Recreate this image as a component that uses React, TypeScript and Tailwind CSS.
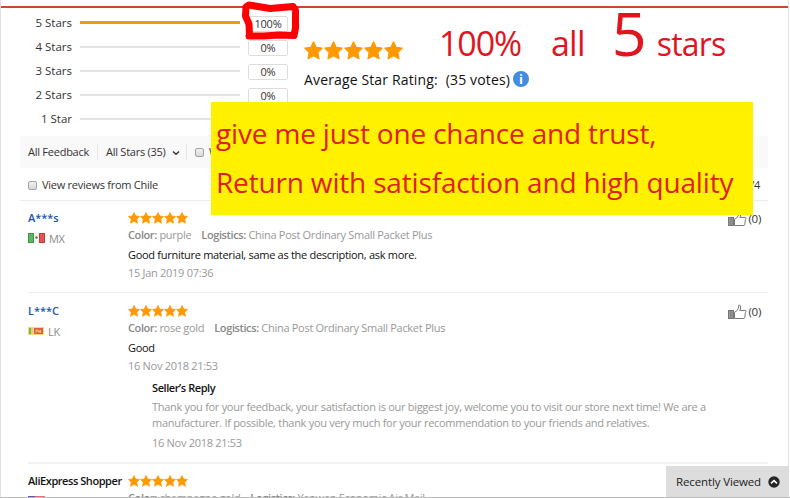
import type { ReactNode } from "react";

const ratings = [
  { label: "5 Stars", percent: 100 },
  { label: "4 Stars", percent: 0 },
  { label: "3 Stars", percent: 0 },
  { label: "2 Stars", percent: 0 },
  { label: "1 Star", percent: 0 },
];

function Stars({ size, step }: { size: number; step: number }) {
  return (
    <svg width={step * 5} height={size} className="block" fill="#ff9900">
      {[0, 1, 2, 3, 4].map((i) => (
        <path
          key={i}
          transform={`translate(${i * step} 0) scale(${size / 20})`}
          d="M10 0.8 L12.8 6.7 L19.2 7.5 L14.6 12 L15.8 18.8 L10 15.5 L4.2 18.8 L5.4 12 L0.8 7.5 L7.2 6.7 Z"
          stroke="#ff9900"
          strokeWidth="1.2"
          strokeLinejoin="round"
        />
      ))}
    </svg>
  );
}

function Checkbox() {
  return (
    <span className="h-[9px] w-[9px] shrink-0 rounded-[2px] border border-[#a3a3a3] bg-linear-to-b from-[#f2f2f2] to-[#d9d9d9]" />
  );
}

function Helpful() {
  return (
    <div className="mr-[7px] mt-px flex h-5 items-center gap-[2px] text-[11.5px] tracking-[-0.3px] text-[#333]">
      <svg width="19" height="16" viewBox="0 0 19 16" fill="none" stroke="#777" strokeWidth="1">
        <rect x="0.5" y="6.5" width="5" height="8" fill="#999" />
        <path d="M2.5 7v7M4 7v7" stroke="#777" strokeWidth="0.6" />
        <path
          fill="#fff"
          d="M6.5 8.2 L8.5 7.2 L10.4 4.4 V1.8 C10.4 .8 12.3 .8 12.5 2 V5.2 L11.7 6.4 H17 C18.4 6.4 18.2 8.2 17.4 8.5 L16.8 13.4 Q16.6 14.5 15.7 14.5 H6.5 Z"
        />
      </svg>
      <span>(0)</span>
    </div>
  );
}

function Flag({ country }: { country: string }) {
  if (country === "MX") {
    return (
      <svg width="17" height="10" className="block">
        <rect width="17" height="10" fill="#f4f6f4" />
        <rect x="0.5" y="0.5" width="5" height="9" fill="#5fb564" stroke="#39964a" />
        <rect x="11.5" y="0.5" width="5" height="9" fill="#e05555" stroke="#c73939" />
        <circle cx="8.5" cy="4.5" r="1.2" fill="#5f6f57" />
      </svg>
    );
  }
  if (country === "LK") {
    return (
      <svg width="16" height="8" className="block">
        <rect width="16" height="8" fill="#f4d67c" />
        <rect x="1" y="1" width="2" height="6" fill="#76bb4a" />
        <rect x="3" y="1" width="2" height="6" fill="#f3c97a" />
        <rect x="6" y="1" width="9" height="6" fill="#d8603c" />
        <path d="M8 6V3h2v2h2V3l1 3" fill="none" stroke="#f2c779" />
      </svg>
    );
  }
  return (
    <svg width="17" height="10" className="block">
      <rect width="17" height="10" fill="#f3dada" />
      <path d="M0 .5h17M0 3.5h17M0 6.5h17" stroke="#df7474" />
      <rect width="7" height="6" fill="#5558b0" />
    </svg>
  );
}

type ReviewProps = {
  user: ReactNode;
  country: string;
  color: string;
  logistics: string;
  children?: ReactNode;
};

function Review({ user, country, color, logistics, children }: ReviewProps) {
  return (
    <div className="flex">
      <div className="w-[100px] shrink-0 whitespace-nowrap text-[11px] leading-5">
        {user}
        <div className="flex h-5 items-center gap-1 tracking-[-0.3px] text-[#8c8c8c]">
          <Flag country={country} />
          {country !== "US" && <span className="pt-[2px]">{country}</span>}
        </div>
      </div>
      <div className="min-w-0 flex-1 text-[11px] tracking-[-0.29px]">
        <div className="pt-[4px]">
          <Stars size={12} step={12} />
        </div>
        <div className="mt-[3px] flex h-4 items-center gap-[10px] whitespace-nowrap text-[#999]">
          <span>
            <b className="font-semibold tracking-[-0.4px] text-[#888]">Color:</b> {color}
          </span>
          <span>
            <b className="font-semibold tracking-[-0.4px] text-[#888]">Logistics:</b> {logistics}
          </span>
        </div>
        {children}
      </div>
      {children && <Helpful />}
    </div>
  );
}

export default function App() {
  return (
    <div
      className="relative h-[498px] w-[790px] overflow-hidden bg-white text-[#333]"
      style={{ fontFamily: '"Open Sans", "Noto Sans", sans-serif' }}
    >
      <div className="h-full w-[789px] border-x border-[#e2e2e2] pt-[6px]">
        <div className="h-[2px] bg-[#d1432b]" />
        <section className="flex h-[128px] pt-[3px]">
          <div className="w-[303px]">
            {ratings.map(({ label, percent }) => (
              <div key={label} className="flex h-6 items-center text-[11.5px]">
                <span className="w-[71px] text-right">{label}</span>
                <div className="mx-2 h-[2px] w-40 bg-[#e3e3e3]">
                  <div className="-mt-px h-[3px] bg-[#f7941d]" style={{ width: `${percent}%` }} />
                </div>
                <span className="mt-[2px] flex h-4 w-10 items-center justify-center rounded-[2px] border border-[#ddd] text-[11px] tracking-[-0.2px]">
                  {percent}%
                </span>
              </div>
            ))}
          </div>
          <div className="pt-[30px]">
            <Stars size={19} step={20} />
            <div className="mt-[9px] flex h-5 items-center text-[14px] tracking-[0.14px] text-[#111]">
              <span>Average Star Rating:</span>
              <span className="ml-2">(35 votes)</span>
              <span className="ml-[3px] flex h-4 w-4 items-center justify-center rounded-full bg-[#438cdf] text-[13px] font-bold leading-none text-white">
                i
              </span>
            </div>
          </div>
        </section>

        <div className="ml-[19px] w-[748px]">
          <div className="flex h-8 items-center bg-[#f9f9f9] pl-2 text-[11px] tracking-[-0.25px]">
            <span className="w-[69px] whitespace-nowrap">All Feedback</span>
            <span className="flex h-4 w-[89px] items-center gap-[6px] whitespace-nowrap border-l border-[#e7e7e7] pl-2 pt-px">
              All Stars (35)
              <svg width="8" height="6" fill="none" stroke="#333" strokeWidth="1.4">
                <path d="M1 1.5 4 4.3 7 1.5" />
              </svg>
            </span>
            <span className="flex h-4 items-center gap-[5px] border-l border-[#e7e7e7] pl-2">
              <Checkbox />
              With
            </span>
          </div>
          <div className="flex h-[33px] items-center border-b border-[#ebebeb] px-2 pt-[2px] text-[11px] tracking-[-0.26px]">
            <Checkbox />
            <span className="ml-[5px]">View reviews from Chile</span>
            <span className="ml-auto">1/4</span>
          </div>

          <div className="ml-2 h-[92px] border-b border-[#f0f0f0] pt-[7px]">
            <Review
              user={<div className="font-semibold text-[#1656a6]">A***s</div>}
              country="MX"
              color="purple"
              logistics="China Post Ordinary Small Packet Plus"
            >
              <div className="h-5 leading-[24px] text-[#111]">
                Good furniture material, same as the description, ask more.
              </div>
              <div className="h-4 leading-[20px] text-[#999]">15 Jan 2019 07:36</div>
            </Review>
          </div>

          <div className="ml-2 h-[171px] border-b-2 border-[#f2f2f2] pt-[8px]">
            <Review
              user={<div className="font-semibold text-[#1656a6]">L***C</div>}
              country="LK"
              color="rose gold"
              logistics="China Post Ordinary Small Packet Plus"
            >
              <div className="h-5 leading-[24px] text-[#111]">Good</div>
              <div className="h-4 leading-[20px] text-[#999]">16 Nov 2018 21:53</div>
              <div className="ml-6 mt-[6px] whitespace-nowrap text-[#999]">
                <div className="h-[21px] font-semibold leading-5 tracking-[-0.42px] text-[#111]">
                  Seller’s Reply
                </div>
                <p className="leading-4">
                  Thank you for your feedback, your satisfaction is our biggest joy, welcome you to visit our store next time! We are a
                  <br />
                  manufacturer. If possible, thank you very much for your recommendation to your friends and relatives.
                </p>
                <div className="h-6 leading-6">16 Nov 2018 21:53</div>
              </div>
            </Review>
          </div>

          <div className="ml-2 pt-[7px]">
            <Review
              user={<div className="font-semibold tracking-[-0.44px] text-[#111]">AliExpress Shopper</div>}
              country="US"
              color="champagne gold"
              logistics="Yanwen Economic Air Mail"
            />
          </div>
        </div>
      </div>

      {/* red marker around the top percentage */}
      <svg className="absolute left-[236px] top-0" width="66" height="44" fill="none">
        <path
          d="M13.5 35 L13 24 L9.5 16 L10 7 L13 5 L22 6.5 L34 8.5 L46 7.5 L57 6.5 L59.5 10 L59.5 28 L58 35.5 L43 35 L28 36 L13 36"
          stroke="#ff0000"
          strokeWidth="7"
          strokeLinecap="round"
          strokeLinejoin="round"
        />
      </svg>

      <div className="absolute left-[439px] top-0 flex items-baseline whitespace-nowrap pt-[2px] leading-none tracking-[-0.8px] text-[#df161e]">
        <span className="text-[34px] tracking-[-1.1px]">100%</span>
        <span className="ml-[30px] text-[34px]">all</span>
        <span className="ml-[27px] text-[61px]">5</span>
        <span className="ml-[11px] text-[32px]">stars</span>
      </div>

      <div className="absolute left-[211px] top-[102px] h-[113px] w-[542px] whitespace-nowrap bg-[#fff100] pl-[5px] pt-[7px] text-[28px] leading-[49px] tracking-[-0.17px] text-[#e01e1b]">
        <p>give me just one chance and trust,</p>
        <p>Return with satisfaction and high quality</p>
      </div>

      <div className="absolute bottom-0 left-[666px] flex h-8 w-[123px] items-center justify-between bg-[#dddddd] pl-[10px] pr-[9px] text-[11.5px] tracking-[-0.13px] text-[#222]">
        Recently Viewed
        <svg width="12" height="12" fill="none">
          <circle cx="6" cy="6" r="5.7" fill="#262626" />
          <path d="M3 7.4 6 4.6 9 7.4" stroke="#fff" strokeWidth="1.5" />
        </svg>
      </div>
      <div className="absolute bottom-0 left-0 h-px w-full bg-[#bdbdbd]" />
    </div>
  );
}
